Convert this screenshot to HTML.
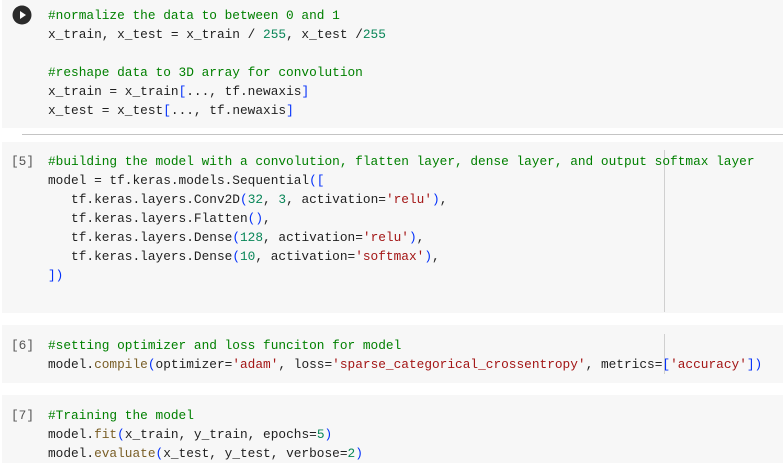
<!DOCTYPE html><html><head><style>
body{margin:0;width:783px;height:463px;background:#fff;position:relative;overflow:hidden;font-family:"Liberation Mono",monospace;font-size:12.8px;color:#1f1f1f}
.cell{position:absolute;left:2px;right:0;background:#f7f7f7}
.code{position:absolute;left:48px;line-height:19px;white-space:pre}
.num{position:absolute;left:11px;line-height:19px;color:#555;white-space:pre}
.c{color:#008000}.s{color:#a31515}.n{color:#098658}.b{color:#0431fa}.f{color:#795e26}
.rul{position:absolute;left:664px;width:1px;background:#d0d0d0}
</style></head><body>
<div class="cell" style="top:0;height:128px"></div>
<div style="position:absolute;left:22px;right:0;top:134px;height:1px;background:#c4c4c4"></div>
<div class="cell" style="top:142px;height:171px"></div>
<div class="cell" style="top:325px;height:58px"></div>
<div class="cell" style="top:395px;height:68px"></div>
<div class="rul" style="top:150px;height:162px"></div>
<div class="rul" style="top:334px;height:40px"></div>
<svg style="position:absolute;left:12px;top:5px" width="20" height="20"><circle cx="10" cy="10" r="9.5" fill="#2b2b2b"/><path d="M8 6 L14 10 L8 14Z" fill="#fff"/></svg>
<div class="code" style="top:6px"><span class="c">#normalize the data to between 0 and 1</span>
x_train, x_test = x_train / <span class="n">255</span>, x_test /<span class="n">255</span>

<span class="c">#reshape data to 3D array for convolution</span>
x_train = x_train<span class="b">[</span>..., tf.newaxis<span class="b">]</span>
x_test = x_test<span class="b">[</span>..., tf.newaxis<span class="b">]</span></div>
<div class="num" style="top:152px">[5]</div>
<div class="code" style="top:152px"><span class="c">#building the model with a convolution, flatten layer, dense layer, and output softmax layer</span>
model = tf.keras.models.Sequential<span class="b">([</span>
   tf.keras.layers.Conv2D<span class="b">(</span><span class="n">32</span>, <span class="n">3</span>, activation=<span class="s">'relu'</span><span class="b">)</span>,
   tf.keras.layers.Flatten<span class="b">()</span>,
   tf.keras.layers.Dense<span class="b">(</span><span class="n">128</span>, activation=<span class="s">'relu'</span><span class="b">)</span>,
   tf.keras.layers.Dense<span class="b">(</span><span class="n">10</span>, activation=<span class="s">'softmax'</span><span class="b">)</span>,
<span class="b">])</span></div>
<div class="num" style="top:336px">[6]</div>
<div class="code" style="top:336px"><span class="c">#setting optimizer and loss funciton for model</span>
model.<span class="f">compile</span><span class="b">(</span>optimizer=<span class="s">'adam'</span>, loss=<span class="s">'sparse_categorical_crossentropy'</span>, metrics=<span class="b">[</span><span class="s">'accuracy'</span><span class="b">])</span></div>
<div class="num" style="top:406px">[7]</div>
<div class="code" style="top:406px"><span class="c">#Training the model</span>
model.<span class="f">fit</span><span class="b">(</span>x_train, y_train, epochs=<span class="n">5</span><span class="b">)</span>
model.<span class="f">evaluate</span><span class="b">(</span>x_test, y_test, verbose=<span class="n">2</span><span class="b">)</span></div>
</body></html>
